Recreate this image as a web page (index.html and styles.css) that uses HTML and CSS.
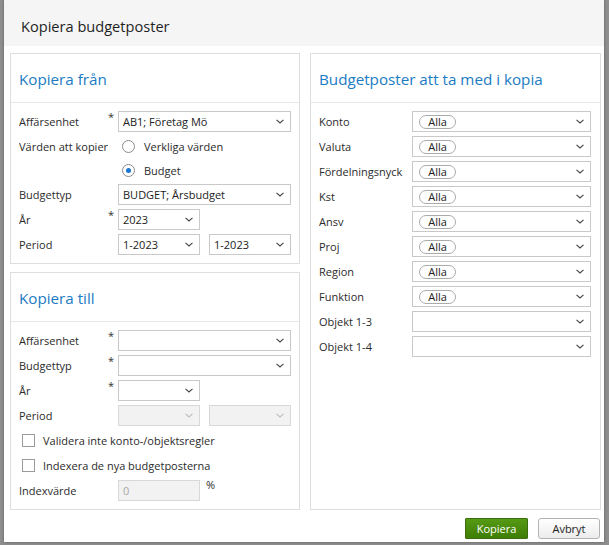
FILE: index.html
```html
<!DOCTYPE html>
<html lang="sv">
<head>
<meta charset="utf-8">
<title>Kopiera budgetposter</title>
<link rel="stylesheet" href="styles.css">
</head>
<body>
<div class="dialog">
  <div class="titlebar">Kopiera budgetposter</div>
  <div class="content">
    <div class="col-left">
      <section class="panel">
        <div class="panel-head">Kopiera från</div>
        <div class="panel-body">
          <div class="row">
            <div class="lbl">Affärsenhet</div><div class="req">*</div>
            <div class="select w-full"><span>AB1; Företag Mö</span><svg class="chev" width="8" height="5" viewBox="0 0 8 5"><path d="M0.5 0.8L4 4L7.5 0.8" fill="none" stroke="#444" stroke-width="1.1"/></svg></div>
          </div>
          <div class="row short">
            <div class="lbl">Värden att kopier</div><div class="req"></div>
            <span class="radio"></span><span>Verkliga värden</span>
          </div>
          <div class="row short">
            <div class="lbl"></div><div class="req"></div>
            <span class="radio checked"><span class="dot"></span></span><span>Budget</span>
          </div>
          <div class="row">
            <div class="lbl">Budgettyp</div><div class="req"></div>
            <div class="select w-full"><span>BUDGET; Årsbudget</span><svg class="chev" width="8" height="5" viewBox="0 0 8 5"><path d="M0.5 0.8L4 4L7.5 0.8" fill="none" stroke="#444" stroke-width="1.1"/></svg></div>
          </div>
          <div class="row">
            <div class="lbl">År</div><div class="req">*</div>
            <div class="select w-small"><span>2023</span><svg class="chev" width="8" height="5" viewBox="0 0 8 5"><path d="M0.5 0.8L4 4L7.5 0.8" fill="none" stroke="#444" stroke-width="1.1"/></svg></div>
          </div>
          <div class="row">
            <div class="lbl">Period</div><div class="req"></div>
            <div class="pair">
              <div class="select w-small"><span>1-2023</span><svg class="chev" width="8" height="5" viewBox="0 0 8 5"><path d="M0.5 0.8L4 4L7.5 0.8" fill="none" stroke="#444" stroke-width="1.1"/></svg></div>
              <div class="select w-small"><span>1-2023</span><svg class="chev" width="8" height="5" viewBox="0 0 8 5"><path d="M0.5 0.8L4 4L7.5 0.8" fill="none" stroke="#444" stroke-width="1.1"/></svg></div>
            </div>
          </div>
        </div>
      </section>
      <section class="panel grow">
        <div class="panel-head">Kopiera till</div>
        <div class="panel-body">
          <div class="row">
            <div class="lbl">Affärsenhet</div><div class="req">*</div>
            <div class="select w-full"><span></span><svg class="chev" width="8" height="5" viewBox="0 0 8 5"><path d="M0.5 0.8L4 4L7.5 0.8" fill="none" stroke="#444" stroke-width="1.1"/></svg></div>
          </div>
          <div class="row">
            <div class="lbl">Budgettyp</div><div class="req">*</div>
            <div class="select w-full"><span></span><svg class="chev" width="8" height="5" viewBox="0 0 8 5"><path d="M0.5 0.8L4 4L7.5 0.8" fill="none" stroke="#444" stroke-width="1.1"/></svg></div>
          </div>
          <div class="row">
            <div class="lbl">År</div><div class="req">*</div>
            <div class="select w-small"><span></span><svg class="chev" width="8" height="5" viewBox="0 0 8 5"><path d="M0.5 0.8L4 4L7.5 0.8" fill="none" stroke="#444" stroke-width="1.1"/></svg></div>
          </div>
          <div class="row">
            <div class="lbl">Period</div><div class="req"></div>
            <div class="pair">
              <div class="select w-small disabled"><span></span><svg class="chev" width="8" height="5" viewBox="0 0 8 5"><path d="M0.5 0.8L4 4L7.5 0.8" fill="none" stroke="#bdbdbd" stroke-width="1.1"/></svg></div>
              <div class="select w-small disabled"><span></span><svg class="chev" width="8" height="5" viewBox="0 0 8 5"><path d="M0.5 0.8L4 4L7.5 0.8" fill="none" stroke="#bdbdbd" stroke-width="1.1"/></svg></div>
            </div>
          </div>
          <div class="row">
            <span class="check"></span><span>Validera inte konto-/objektsregler</span>
          </div>
          <div class="row">
            <span class="check"></span><span>Indexera de nya budgetposterna</span>
          </div>
          <div class="row">
            <div class="lbl">Indexvärde</div><div class="req"></div>
            <div class="input w-small disabled">0</div>
            <span class="pct">%</span>
          </div>
        </div>
      </section>
    </div>
    <section class="panel right">
      <div class="panel-head">Budgetposter att ta med i kopia</div>
      <div class="panel-body">
        <div class="row"><div class="lbl lbl-r">Konto</div><div class="select w-right"><span class="pill">Alla</span><svg class="chev" width="8" height="5" viewBox="0 0 8 5"><path d="M0.5 0.8L4 4L7.5 0.8" fill="none" stroke="#444" stroke-width="1.1"/></svg></div></div>
        <div class="row"><div class="lbl lbl-r">Valuta</div><div class="select w-right"><span class="pill">Alla</span><svg class="chev" width="8" height="5" viewBox="0 0 8 5"><path d="M0.5 0.8L4 4L7.5 0.8" fill="none" stroke="#444" stroke-width="1.1"/></svg></div></div>
        <div class="row"><div class="lbl lbl-r">Fördelningsnyck</div><div class="select w-right"><span class="pill">Alla</span><svg class="chev" width="8" height="5" viewBox="0 0 8 5"><path d="M0.5 0.8L4 4L7.5 0.8" fill="none" stroke="#444" stroke-width="1.1"/></svg></div></div>
        <div class="row"><div class="lbl lbl-r">Kst</div><div class="select w-right"><span class="pill">Alla</span><svg class="chev" width="8" height="5" viewBox="0 0 8 5"><path d="M0.5 0.8L4 4L7.5 0.8" fill="none" stroke="#444" stroke-width="1.1"/></svg></div></div>
        <div class="row"><div class="lbl lbl-r">Ansv</div><div class="select w-right"><span class="pill">Alla</span><svg class="chev" width="8" height="5" viewBox="0 0 8 5"><path d="M0.5 0.8L4 4L7.5 0.8" fill="none" stroke="#444" stroke-width="1.1"/></svg></div></div>
        <div class="row"><div class="lbl lbl-r">Proj</div><div class="select w-right"><span class="pill">Alla</span><svg class="chev" width="8" height="5" viewBox="0 0 8 5"><path d="M0.5 0.8L4 4L7.5 0.8" fill="none" stroke="#444" stroke-width="1.1"/></svg></div></div>
        <div class="row"><div class="lbl lbl-r">Region</div><div class="select w-right"><span class="pill">Alla</span><svg class="chev" width="8" height="5" viewBox="0 0 8 5"><path d="M0.5 0.8L4 4L7.5 0.8" fill="none" stroke="#444" stroke-width="1.1"/></svg></div></div>
        <div class="row"><div class="lbl lbl-r">Funktion</div><div class="select w-right"><span class="pill">Alla</span><svg class="chev" width="8" height="5" viewBox="0 0 8 5"><path d="M0.5 0.8L4 4L7.5 0.8" fill="none" stroke="#444" stroke-width="1.1"/></svg></div></div>
        <div class="row"><div class="lbl lbl-r">Objekt 1-3</div><div class="select w-right"><span></span><svg class="chev" width="8" height="5" viewBox="0 0 8 5"><path d="M0.5 0.8L4 4L7.5 0.8" fill="none" stroke="#444" stroke-width="1.1"/></svg></div></div>
        <div class="row"><div class="lbl lbl-r">Objekt 1-4</div><div class="select w-right"><span></span><svg class="chev" width="8" height="5" viewBox="0 0 8 5"><path d="M0.5 0.8L4 4L7.5 0.8" fill="none" stroke="#444" stroke-width="1.1"/></svg></div></div>
      </div>
    </section>
  </div>
  <div class="footer">
    <button class="btn primary">Kopiera</button>
    <button class="btn">Avbryt</button>
  </div>
</div>
</body>
</html>
```

FILE: styles.css
```css
html, body {
  margin: 0;
  padding: 0;
}
body {
  background: #8f8f8f;
  font-family: "Open Sans", "Noto Sans", sans-serif;
  font-size: 11px;
  color: #2b2b2b;
  width: 609px;
  height: 545px;
  overflow: hidden;
}
.dialog {
  width: 600px;
  height: 542px;
  margin-left: 4px;
  background: #fff;
  display: flex;
  flex-direction: column;
  box-shadow: 0 0 3px rgba(0, 0, 0, 0.35);
}
.titlebar {
  height: 46px;
  box-sizing: border-box;
  padding: 5px 0 0 17px;
  background: #f5f5f5;
  font-size: 14.6px;
  color: #1f1f1f;
  display: flex;
  align-items: center;
}
.content {
  display: flex;
  gap: 10px;
  padding: 7px 3px 0 6px;
}
.col-left {
  width: 290px;
  display: flex;
  flex-direction: column;
  gap: 8px;
}
.panel {
  border: 1px solid #dedede;
  background: #fff;
  display: flex;
  flex-direction: column;
}
.panel.grow {
  flex: 1;
}
.panel.right {
  width: 291px;
  box-sizing: border-box;
}
.panel-head {
  height: 49px;
  box-sizing: border-box;
  border-bottom: 1px solid #e6e6e6;
  padding: 2px 0 0 8px;
  display: flex;
  align-items: center;
  font-size: 15.2px;
  color: #1b7bc3;
}
.panel-body {
  padding: 8px;
  display: flex;
  flex-direction: column;
  gap: 4px;
}
.row {
  display: flex;
  align-items: center;
  height: 21px;
}
.row.short {
  height: 20px;
}
.lbl {
  width: 89px;
  flex: none;
  overflow: hidden;
  white-space: nowrap;
}
.lbl-r {
  width: 87px;
  margin-right: 6px;
}
.req {
  width: 10px;
  flex: none;
  align-self: flex-start;
  font-size: 11px;
  line-height: 10px;
  padding-top: 1px;
  color: #333;
}
.select, .input {
  height: 21px;
  box-sizing: border-box;
  border: 1px solid #c9c9c9;
  background: #fff;
  display: flex;
  align-items: center;
  justify-content: space-between;
  padding: 0 6px 0 4px;
  color: #222;
  white-space: nowrap;
  flex: none;
}
.select.disabled, .input.disabled {
  background: #f2f2f2;
  border-color: #d8d8d8;
  color: #a8a8a8;
}
.chev {
  display: block;
  flex: none;
}
.w-full {
  width: 173px;
}
.w-small {
  width: 82px;
}
.w-right {
  width: 179px;
}
.pair {
  display: flex;
  gap: 9px;
}
.pill {
  margin-left: 2px;
  width: 37px;
  height: 14px;
  box-sizing: border-box;
  border: 1px solid #ababab;
  border-radius: 7px;
  display: flex;
  align-items: center;
  justify-content: center;
  line-height: 1;
  color: #222;
}
.radio {
  width: 13px;
  height: 13px;
  box-sizing: border-box;
  border: 1px solid #8c8c8c;
  border-radius: 50%;
  margin: 0 9px 0 4px;
  display: flex;
  align-items: center;
  justify-content: center;
  background: #fff;
}
.dot {
  width: 5px;
  height: 5px;
  border-radius: 50%;
  background: #1976d2;
}
.check {
  width: 13px;
  height: 13px;
  box-sizing: border-box;
  border: 1px solid #9a9a9a;
  margin: 0 8px 0 3px;
  background: #fff;
}
.pct {
  align-self: flex-start;
  margin-left: 6px;
  line-height: 12px;
  margin-top: -1px;
}
.footer {
  display: flex;
  justify-content: flex-end;
  gap: 10px;
  padding: 8px 4px 0 0;
}
.btn {
  height: 21px;
  width: 62px;
  box-sizing: border-box;
  font-family: "Open Sans", "Noto Sans", sans-serif;
  font-size: 11px;
  padding: 0;
  border-radius: 3px;
  border: 1px solid #b3b3b3;
  background: linear-gradient(#ffffff, #ececec);
  color: #222;
}
.btn.primary {
  width: 63px;
  border-radius: 1px;
  border-color: #3c6e10;
  background: linear-gradient(#559a14, #3f7d05);
  color: #fff;
}
```
